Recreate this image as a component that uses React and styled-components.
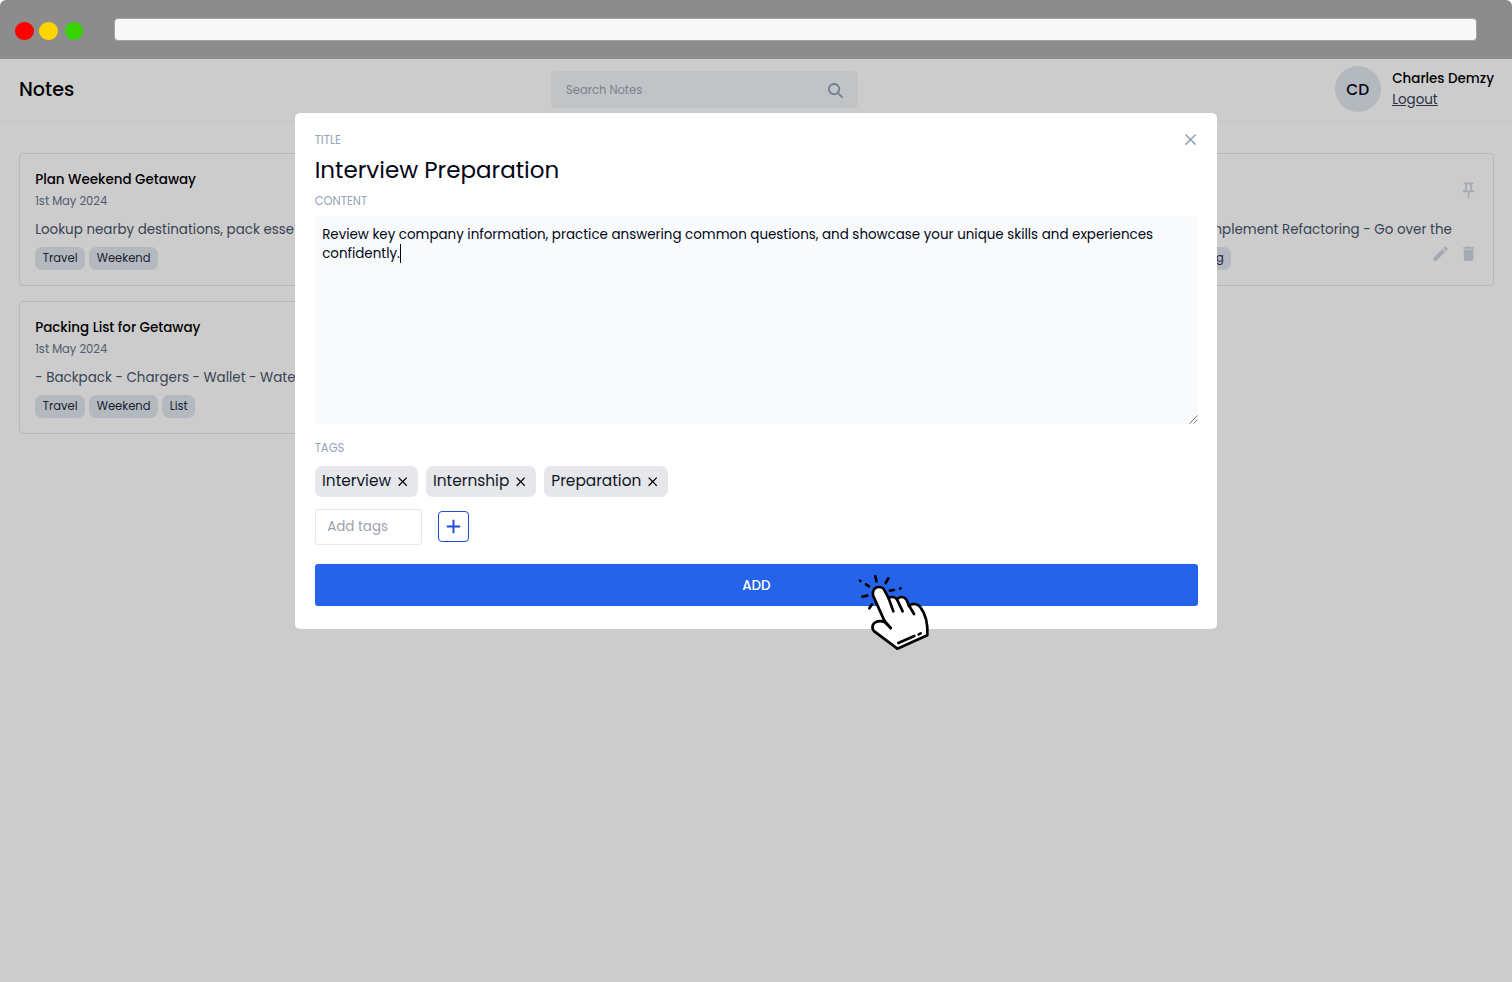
import React from "react";
import styled, { createGlobalStyle } from "styled-components";
import { FaMagnifyingGlass } from "react-icons/fa6";
import { MdAdd, MdClose, MdCreate, MdDelete, MdOutlinePushPin } from "react-icons/md";

const GlobalStyle = createGlobalStyle`
  *, *::before, *::after { box-sizing: border-box; }
  body {
    margin: 0;
    background: #fff;
    font-family: Poppins, Inter, "Liberation Sans", sans-serif;
    color: #000;
  }
  button, input { font: inherit; }
`;

const Screen = styled.div`
  position: relative;
  display: flex;
  flex-direction: column;
  height: 982px;
  overflow: hidden;
`;

const BrowserBar = styled.div`
  display: flex;
  align-items: center;
  height: 59px;
  padding: 0 35px 0 15px;
  background: #8c8c8c;
  border-radius: 6px 6px 0 0;
  flex: none;
`;

const Lights = styled.div`
  display: flex;
  width: 98.6px;
  padding-top: 3px;
`;

const Light = styled.span`
  width: 18.6px;
  height: 18.6px;
  margin-right: ${(p) => p.$gap}px;
  border-radius: 50%;
  background: ${(p) => p.$color};
`;

const AddressBar = styled.div`
  flex: 1;
  height: 23px;
  border: 1px solid #a4a4a4;
  border-radius: 4px;
  background: #f8f8f8;
`;

const Page = styled.div`
  position: relative;
  flex: 1;
`;

const Header = styled.header`
  display: flex;
  align-items: center;
  justify-content: space-between;
  height: 63px;
  padding: 0 18px 1px 19px;
  border-bottom: 1px solid #f7f8f9;
`;

const Brand = styled.h1`
  margin: 0;
  padding-top: 1px;
  font-size: 19.2px;
  font-weight: 500;
  line-height: 30px;
`;

const SearchBox = styled.div`
  display: flex;
  align-items: center;
  justify-content: space-between;
  width: 307px;
  height: 36.5px;
  padding: 1px 15px 0;
  border-radius: 5px;
  background: #f1f5f9;
  color: #9ca3af;
  font-size: 11.52px;
  svg { color: #94a3b8; }
`;

const Profile = styled.div`
  display: flex;
  align-items: center;
  gap: 11.5px;
  margin-top: -1px;
`;

const Avatar = styled.div`
  display: flex;
  align-items: center;
  justify-content: center;
  width: 46px;
  height: 46px;
  border-radius: 50%;
  background: #e2e8f0;
  color: #020617;
  font-size: 15.36px;
  font-weight: 500;
`;

const UserName = styled.div`
  font-size: 13.44px;
  font-weight: 500;
  line-height: 21px;
  white-space: nowrap;
`;

const Logout = styled.a`
  display: block;
  width: max-content;
  color: #334155;
  font-size: 13.44px;
  line-height: 21px;
  text-decoration: underline;
`;

const Notes = styled.main`
  display: grid;
  grid-template-columns: repeat(3, 1fr);
  gap: 15.4px;
  padding: 31px 18px 0 19px;
`;

const Card = styled.article`
  display: flex;
  justify-content: space-between;
  grid-column: ${(p) => p.$column};
  height: 132.6px;
  padding: 14px 15.2px;
  border: 1px solid #e5e7eb;
  border-radius: 4px;
`;

const CardBody = styled.div`
  flex: 1;
  min-width: 0;
  display: flex;
  flex-direction: column;
  align-items: ${(p) => (p.$end ? "flex-end" : "flex-start")};
`;

const CardTitle = styled.h2`
  height: 23px;
  margin: 0;
  font-size: 13.44px;
  font-weight: 500;
  line-height: 23px;
  white-space: nowrap;
`;

const CardDate = styled.div`
  height: 20px;
  color: #64748b;
  font-size: 11.52px;
  line-height: 20px;
`;

const CardText = styled.p`
  height: 24px;
  margin: 7px 0 4.6px;
  color: #475569;
  font-size: 13.44px;
  line-height: 24px;
  white-space: nowrap;
`;

const TagRow = styled.div`
  display: flex;
  gap: 4px;
  margin-right: ${(p) => p.$inset || 0}px;
`;

const Tag = styled.span`
  height: 23px;
  padding: 0 7.6px;
  border-radius: 7px;
  background: #e2e8f0;
  color: #1e293b;
  font-size: 11.52px;
  line-height: 23px;
`;

const CardActions = styled.div`
  display: flex;
  flex-direction: column;
  justify-content: space-between;
  align-items: flex-end;
  width: 26px;
  padding: 13px 0 7px 0;
  color: #cbd5e1;
`;

const EditActions = styled.div`
  display: flex;
  gap: 8px;
`;

const Overlay = styled.div`
  position: absolute;
  inset: 0;
  display: flex;
  justify-content: center;
  align-items: flex-start;
  padding-top: 54px;
  background: rgba(0, 0, 0, 0.2);
`;

const Modal = styled.section`
  position: relative;
  display: flex;
  flex-direction: column;
  width: 922px;
  height: 516px;
  margin-left: 0.7px;
  padding: 16.6px 19.3px 0;
  border-radius: 5px;
  background: #fff;
`;

const CloseButton = styled.button`
  position: absolute;
  top: 17px;
  right: 17px;
  display: flex;
  padding: 0;
  border: 0;
  background: none;
  color: #94a3b8;
`;

const Label = styled.label`
  height: 20px;
  color: #94a3b8;
  font-size: 11.52px;
  line-height: 20px;
`;

const TitleInput = styled.input`
  height: 41.4px;
  padding: 0;
  border: 0;
  outline: 0;
  color: #020617;
  font-size: 23.04px;
`;

const ContentBox = styled.div`
  position: relative;
  height: 208px;
  margin: 5px 0 14px;
  padding: 8.6px 7.5px;
  border-radius: 3px;
  background: #f8fafc;
  color: #020617;
  font-size: 13.44px;
  line-height: 19.2px;
`;

const Line = styled.div`
  display: flex;
  align-items: center;
  height: 19.2px;
  white-space: nowrap;
`;

const Caret = styled.span`
  width: 1px;
  height: 19px;
  background: #020617;
`;

const ResizeGrip = styled.svg`
  position: absolute;
  right: 0;
  bottom: 0;
`;

const Chips = styled.div`
  display: flex;
  gap: 7.8px;
  margin-top: 8px;
`;

const Chip = styled.span`
  display: flex;
  align-items: center;
  gap: 4px;
  height: 30.7px;
  padding: 0 7.4px 1px;
  border-radius: 7px;
  background: #e5e7eb;
  color: #111827;
  font-size: 15.36px;
  svg { position: relative; top: 1px; color: #000; }
`;

const AddRow = styled.div`
  display: flex;
  align-items: center;
  gap: 15.4px;
  margin-top: 12px;
`;

const TagInput = styled.input`
  width: 107.5px;
  height: 36.5px;
  padding: 1px 11.5px 0;
  border: 1px solid #e5e7eb;
  border-radius: 3px;
  outline: 0;
  font-size: 13.44px;
  &::placeholder { color: #9ca3af; }
`;

const AddTagButton = styled.button`
  display: flex;
  align-items: center;
  justify-content: center;
  width: 31px;
  height: 31px;
  padding: 0;
  border: 1px solid #1d4ed8;
  border-radius: 4px;
  background: #fff;
  color: #1d4ed8;
`;

const SubmitButton = styled.button`
  height: 42.3px;
  margin-top: 19px;
  padding: 1px 0 0;
  border: 0;
  border-radius: 3px;
  background: #2563eb;
  color: #fff;
  font-size: 13.44px;
  font-weight: 500;
`;

const HandCursor = styled.svg`
  position: absolute;
  left: 840px;
  top: 560px;
`;

function NoteCard({ title, text, tags }) {
  return (
    <Card $column={1}>
      <CardBody>
        <CardTitle>{title}</CardTitle>
        <CardDate>1st May 2024</CardDate>
        <CardText>{text}</CardText>
        <TagRow>
          {tags.map((name) => (
            <Tag key={name}>{name}</Tag>
          ))}
        </TagRow>
      </CardBody>
    </Card>
  );
}

export default function App() {
  return (
    <Screen>
      <GlobalStyle />
      <BrowserBar>
        <Lights>
          <Light $color="#ff0000" $gap={5.6} />
          <Light $color="#ffd500" $gap={6.9} />
          <Light $color="#37d400" $gap={0} />
        </Lights>
        <AddressBar />
      </BrowserBar>
      <Page>
        <Header>
          <Brand>Notes</Brand>
          <SearchBox>
            Search Notes
            <FaMagnifyingGlass size={15} />
          </SearchBox>
          <Profile>
            <Avatar>CD</Avatar>
            <div>
              <UserName>Charles Demzy</UserName>
              <Logout>Logout</Logout>
            </div>
          </Profile>
        </Header>
        <Notes>
          <NoteCard
            title="Plan Weekend Getaway"
            text="Lookup nearby destinations, pack esse"
            tags={["Travel", "Weekend"]}
          />
          <Card $column={3}>
            <CardBody $end>
              <CardTitle />
              <CardDate />
              <CardText>Implement Refactoring - Go over the</CardText>
              <TagRow $inset={220.5}>
                <Tag>g</Tag>
              </TagRow>
            </CardBody>
            <CardActions>
              <MdOutlinePushPin size={19.2} />
              <EditActions>
                <MdCreate size={19.2} />
                <MdDelete size={19.2} />
              </EditActions>
            </CardActions>
          </Card>
          <NoteCard
            title="Packing List for Getaway"
            text="- Backpack - Chargers - Wallet - Wate"
            tags={["Travel", "Weekend", "List"]}
          />
        </Notes>
        <Overlay>
          <Modal>
            <CloseButton aria-label="Close">
              <MdClose size={19.2} />
            </CloseButton>
            <Label>TITLE</Label>
            <TitleInput defaultValue="Interview Preparation" />
            <Label>CONTENT</Label>
            <ContentBox>
              <Line>
                Review key company information, practice answering common questions, and showcase your unique skills and experiences
              </Line>
              <Line>
                confidently.
                <Caret />
              </Line>
              <ResizeGrip width="9" height="9" viewBox="0 0 9 9" fill="none" stroke="#777" strokeWidth="1">
                <path d="M0.5 8.5L8.5 0.5M4.5 8.5L8.5 4.5" />
              </ResizeGrip>
            </ContentBox>
            <Label>TAGS</Label>
            <Chips>
              <Chip>Interview<MdClose size={15.4} /></Chip>
              <Chip>Internship<MdClose size={15.4} /></Chip>
              <Chip>Preparation<MdClose size={15.4} /></Chip>
            </Chips>
            <AddRow>
              <TagInput placeholder="Add tags" />
              <AddTagButton aria-label="Add tag">
                <MdAdd size={23} />
              </AddTagButton>
            </AddRow>
            <SubmitButton>ADD</SubmitButton>
          </Modal>
        </Overlay>
      </Page>
      <HandCursor width="120" height="100" viewBox="0 0 360 300" fill="none" stroke="#000" strokeWidth="8" strokeLinecap="round" strokeLinejoin="round">
        <path
          fill="#fff"
          d="M134 184L99 106C96 92 104 81 116 81C126 81 132 86 135 94L146 115C153 108 165 110 171 118C179 107 194 110 200 120L207 138C215 129 232 130 240 140C254 158 264 190 262 226L172 266L104 215C94 207 96 192 106 187C116 182 126 183 134 186L152 204"
        />
        <path d="M146 115L160 154M171 118L188 154M207 136L222 162M133 182L152 204" />
        <path d="M175 249L223 228M236 223L242 220" />
        <path d="M60 62L61 63M78 73L87 79M106 49L109 64M145 55L137 69M150 92L162 90M180 86L182 85M67 110L82 107M96 133L88 145" />
      </HandCursor>
    </Screen>
  );
}
